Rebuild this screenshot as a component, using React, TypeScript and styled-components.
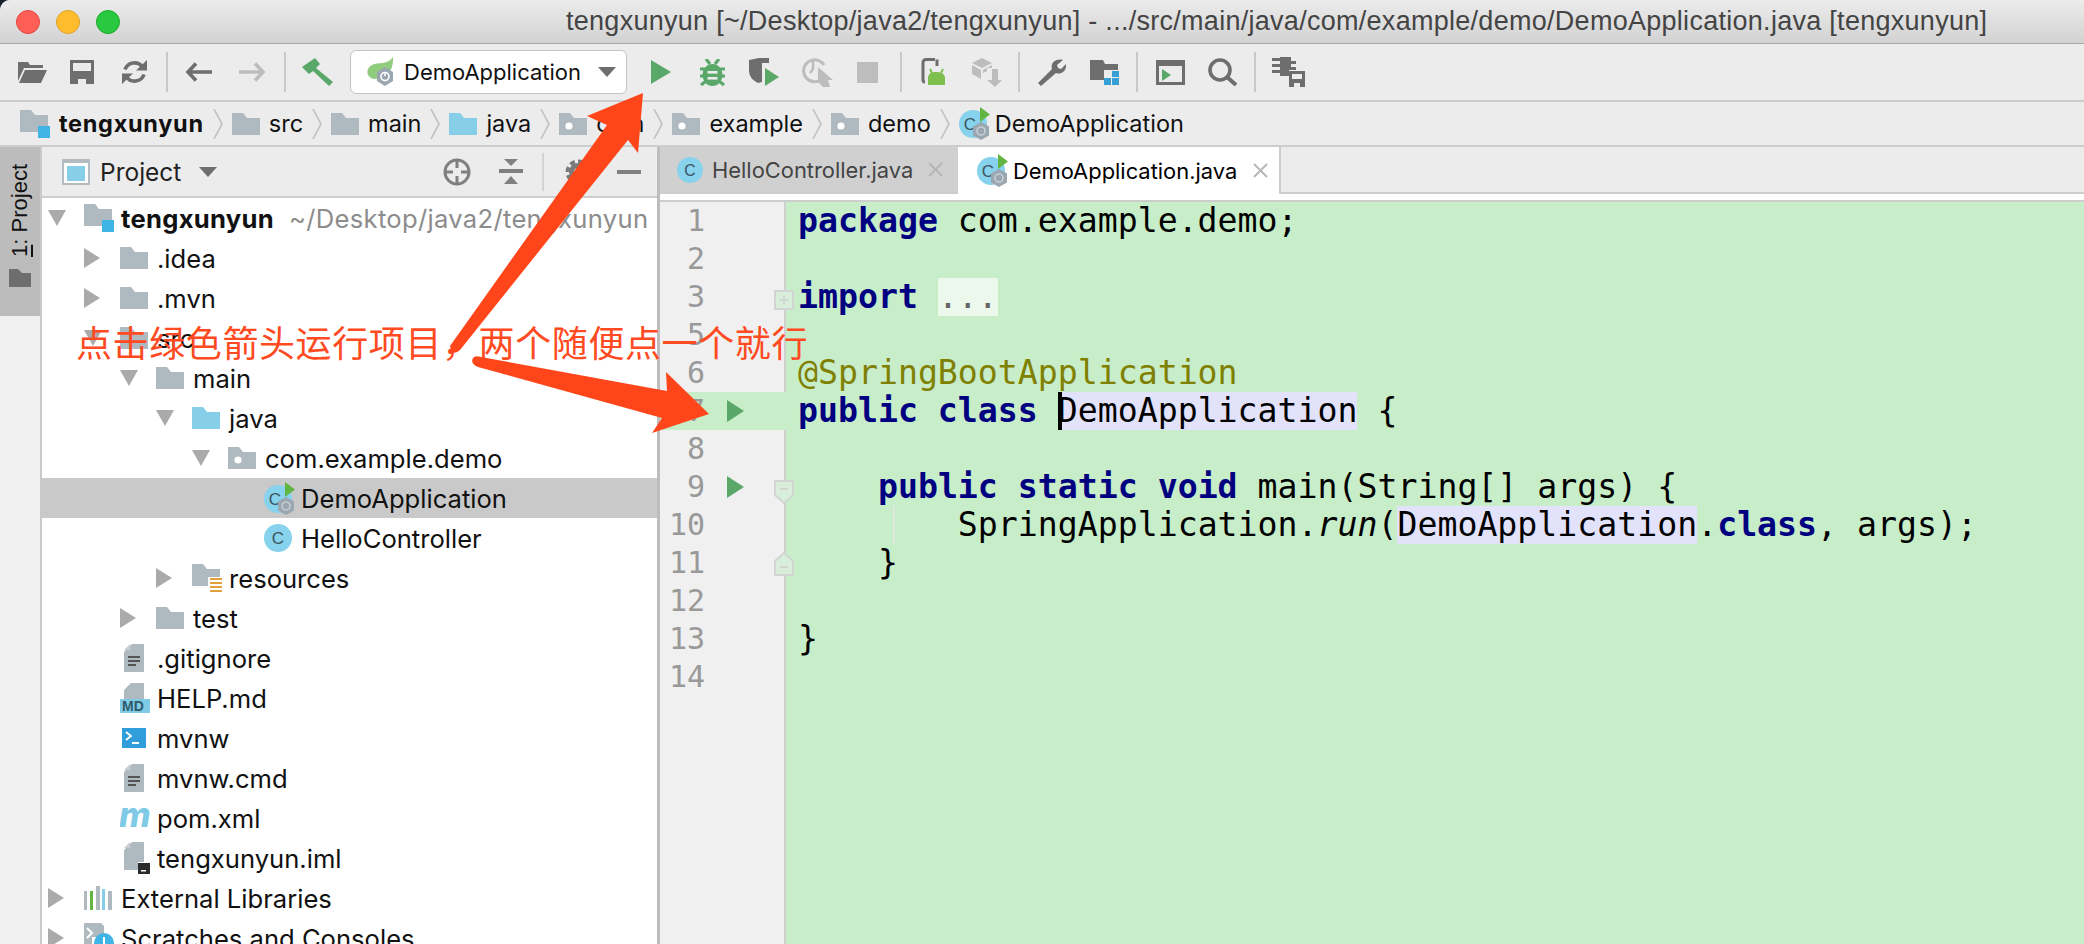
import React from "react";
import styled, { createGlobalStyle } from "styled-components";

const UI = `Inter, "Liberation Sans", sans-serif`;
const GREY = "#6e6e6e";
const DIM = "#bdbdbd";
const GREEN = "#59a869";
const FOLDER = "#afb9c0";
const BLUE = "#87cee9";

const Global = createGlobalStyle`
  html, body { margin: 0; padding: 0; height: 100%; background: #17212e; overflow: hidden; }
  #root { height: 100%; }
`;

const Window = styled.div`
  position: relative; width: 2084px; height: 944px; overflow: hidden;
  display: flex; flex-direction: column; background: #ececec;
  border-top-left-radius: 10px; font-family: ${UI};
`;
const TitleBar = styled.div`
  height: 43px; flex: none; display: flex; align-items: center; padding-left: 16px;
  background: linear-gradient(#ececec, #d2d2d2); border-bottom: 1px solid #a9a9a9;
`;
const Lights = styled.div`display: flex; gap: 16px;`;
const Light = styled.span<{ $c: string; $b: string }>`
  width: 24px; height: 24px; border-radius: 50%; box-sizing: border-box;
  background: ${(p) => p.$c}; border: 1px solid ${(p) => p.$b};
`;
const Title = styled.div`
  margin-left: 446px; font-family: "Liberation Sans", sans-serif; font-size: 27px; letter-spacing: 0.28px;
  color: #444; white-space: nowrap;
`;
const Toolbar = styled.div`
  height: 56px; flex: none; display: flex; align-items: center; padding-left: 7px;
  background: #ececec; border-bottom: 2px solid #cdcdcd;
`;
const Slot = styled.div<{ $w: number }>`
  width: ${(p) => p.$w}px; flex: none; display: flex; align-items: center; justify-content: center;
`;
const Sep = styled.div<{ $ml?: number }>`
  width: 2px; height: 40px; flex: none; background: #c9c9c9; margin-left: ${(p) => p.$ml ?? 0}px;
`;
const RunConfig = styled.div`
  width: 277px; height: 44px; flex: none; box-sizing: border-box; margin-left: 2px;
  display: flex; align-items: center; padding-left: 15px; gap: 8px;
  background: #fff; border: 1px solid #c4c4c4; border-radius: 6px;
  font-size: 22px; color: #111;
`;
const Caret = styled.span`
  width: 0; height: 0; margin-left: 9px;
  border-left: 9px solid transparent; border-right: 9px solid transparent; border-top: 10px solid ${GREY};
`;
const NavBar = styled.div`
  height: 43px; flex: none; display: flex; align-items: center; padding-left: 20px; gap: 9px;
  background: #ececec; border-bottom: 2px solid #cdcdcd; font-size: 23.5px; color: #111;
`;
const Crumb = styled.div<{ $bold?: boolean; $gap?: number }>`
  display: flex; align-items: center; gap: ${(p) => p.$gap ?? 9}px;
  font-weight: ${(p) => (p.$bold ? 700 : 400)};
  letter-spacing: ${(p) => (p.$bold ? "0.7px" : "0")};
`;
const Main = styled.div`flex: 1; min-height: 0; display: flex;`;
const Stripe = styled.div`
  width: 40px; flex: none; background: #f0f0f0; border-right: 2px solid #c9c9c9;
`;
const StripeTab = styled.div`
  height: 169px; box-sizing: border-box; background: #bcbcbc; padding-top: 17px;
  display: flex; flex-direction: column; align-items: center; gap: 12px;
`;
const StripeLabel = styled.div`
  writing-mode: vertical-rl; transform: rotate(180deg); font-family: "Liberation Sans", sans-serif;
  font-size: 22px; color: #111; white-space: nowrap; line-height: 24px;
  u { text-decoration: underline; }
`;
const Panel = styled.div`
  width: 615px; flex: none; display: flex; flex-direction: column; background: #fff;
  border-right: 3px solid #bdbdbd;
`;
const PanelHead = styled.div`
  height: 49px; flex: none; display: flex; align-items: center; padding-left: 20px;
  background: #ececec; border-bottom: 2px solid #cdcdcd; font-size: 24.5px; color: #222;
`;
const PanelName = styled.span`margin-left: 10px;`;
const PanelCaret = styled(Caret)`margin: 0 auto 0 18px;`;
const PanelTool = styled.div<{ $mr: number }>`
  display: flex; margin-right: ${(p) => p.$mr}px; flex: none;
`;
const PanelSep = styled.div`width: 2px; height: 38px; background: #d4d4d4; margin-right: 21px;`;
const Tree = styled.div`flex: 1; min-height: 0; overflow: hidden;`;
const Row = styled.div<{ $depth: number; $sel?: boolean }>`
  height: 40px; display: flex; align-items: center; white-space: nowrap;
  padding-left: ${(p) => 6 + p.$depth * 36}px;
  background: ${(p) => (p.$sel ? "#c9c9c9" : "transparent")};
  font-size: 25.6px; color: #111;
`;
const ArrowSlot = styled.div`width: 36px; flex: none; display: flex; align-items: center;`;
const IconSlot = styled.div`width: 37px; flex: none; display: flex; align-items: center;`;
const RootName = styled.span`font-weight: 700; letter-spacing: 0.3px;`;
const RootPath = styled.span`color: #8c8c8c; margin-left: 15px; letter-spacing: 0.3px;`;
const Right = styled.div`flex: 1; min-width: 0; display: flex; flex-direction: column;`;
const Tabs = styled.div`
  height: 45px; flex: none; display: flex; background: #ececec; border-bottom: 2px solid #cdcdcd;
`;
const Tab = styled.div<{ $active?: boolean; $w: number; $pl: number }>`
  width: ${(p) => p.$w}px; height: ${(p) => (p.$active ? 47 : 45)}px; flex: none; box-sizing: border-box;
  display: flex; align-items: center; padding-left: ${(p) => p.$pl}px;
  background: ${(p) => (p.$active ? "#fff" : "#d0d0d0")};
  border-right: ${(p) => (p.$active ? "2px solid #cdcdcd" : "none")};
  font-size: 21.9px; color: ${(p) => (p.$active ? "#000" : "#444")};
`;
const TabLabel = styled.span<{ $ml: number }>`margin-left: ${(p) => p.$ml}px;`;
const TabClose = styled.span<{ $ml: number }>`display: flex; margin-left: ${(p) => p.$ml}px;`;
const TabGap = styled.div`
  height: 6px; flex: none; background: #fff; border-bottom: 2px solid #cdcdcd;
`;
const Editor = styled.div`flex: 1; min-height: 0; display: flex; background: #c7edc9;`;
const Gutter = styled.div`
  width: 124px; flex: none; background: #f0f0f0; border-right: 2px solid #d0d0d0;
`;
const GutterRow = styled.div<{ $cur?: boolean }>`
  position: relative; height: 38px; display: flex; align-items: center; margin-right: -2px;
  background: ${(p) => (p.$cur ? "#c7edc9" : "transparent")};
`;
const LineNo = styled.span`
  width: 45px; flex: none; text-align: right; font-family: "DejaVu Sans Mono", monospace;
  font-size: 30px; line-height: 38px; color: #999;
`;
const GutterRun = styled.span`display: flex; margin-left: 22px;`;
const Fold = styled.span<{ $top: number }>`
  position: absolute; left: 114px; top: ${(p) => p.$top}px; display: flex;
`;
const Code = styled.div`
  flex: 1; min-width: 0; padding-left: 12px; font-family: "DejaVu Sans Mono", monospace;
  font-size: 33.2px; color: #000; overflow: hidden;
`;
const CodeRow = styled.div`position: relative; height: 38px; line-height: 38px; white-space: pre;`;
const Kw = styled.span`color: #000080; font-weight: 700;`;
const Ann = styled.span`color: #808000;`;
const Ital = styled.span`font-style: italic;`;
const Hl = styled.span<{ $caret?: boolean }>`
  display: inline-block; height: 38px; background: #e2e2fb; vertical-align: top;
  box-shadow: ${(p) => (p.$caret ? "inset 4px 0 0 #000" : "none")};
`;
const Folded = styled.span`
  display: inline-block; height: 38px; background: #ecf8ec; color: #666; vertical-align: top;
`;
const IndentGuide = styled.span`
  position: absolute; left: 95px; top: 0; width: 2px; height: 38px; background: #dfe8df;
`;
const Note = styled.div`
  position: absolute; left: 76px; top: 319px; font-family: "Noto Sans CJK SC", sans-serif;
  font-size: 36px; letter-spacing: 0.6px; line-height: 44px; color: #ff4a22; font-weight: 400;
  white-space: nowrap; pointer-events: none;
`;
const Overlay = styled.svg`position: absolute; left: 0; top: 0; pointer-events: none;`;

/* ------------ icons ------------ */
const OpenIcon = () => (
  <svg width="29" height="21" viewBox="0 0 29 21" fill={GREY}>
    <path d="M0 0H10L12 3H25V6H6L0 19Z" />
    <path d="M7 8H29L23 21H1Z" />
  </svg>
);
const SaveIcon = () => (
  <svg width="24" height="24" viewBox="0 0 24 24">
    <rect width="24" height="24" fill={GREY} />
    <rect x="3" y="3" width="18" height="8" fill="#ececec" />
    <rect x="8" y="19" width="8" height="5" fill="#ececec" />
  </svg>
);
const SyncIcon = () => (
  <svg width="25" height="24" viewBox="0 0 25 24" fill="none" stroke={GREY} strokeWidth="3.6">
    <path d="M3 9.5A10 10 0 0 1 20.5 7" />
    <path d="M22 14.5A10 10 0 0 1 4.5 17" />
    <path d="M14 10.5H25V0Z" fill={GREY} stroke="none" />
    <path d="M11 13.5H0V24Z" fill={GREY} stroke="none" />
  </svg>
);
const ArrowIcon = ({ flip, color }: { flip?: boolean; color: string }) => (
  <svg width="27" height="20" viewBox="0 0 27 20" fill="none" stroke={color} strokeWidth="3.6" style={flip ? { transform: "scaleX(-1)" } : undefined}>
    <path d="M11 1.5L3 10L11 18.5M3 10H27" />
  </svg>
);
const HammerIcon = () => (
  <svg width="31" height="28" viewBox="0 0 31 28" fill={GREEN}>
    <path d="M0 9L13 0L18 6L14 10L31 24L27 28L11 13L7 16Z" />
  </svg>
);
const PlayIcon = ({ w = 20, h = 24 }: { w?: number; h?: number }) => (
  <svg width={w} height={h} viewBox="0 0 20 24" fill={GREEN} preserveAspectRatio="none">
    <path d="M0 0L20 12L0 24Z" />
  </svg>
);
const BugIcon = () => (
  <svg width="25" height="27" viewBox="0 0 25 27" fill={GREEN}>
    <ellipse cx="12.5" cy="16" rx="10" ry="11" />
    <path d="M6 0L10 5M19 0L15 5M0 10H25M0 17H25M1 26L6 22M24 26L19 22" stroke={GREEN} strokeWidth="3.2" fill="none" />
    <rect x="7.5" y="12" width="10" height="2.6" fill="#ececec" />
    <rect x="7.5" y="18" width="10" height="2.6" fill="#ececec" />
  </svg>
);
const CoverageIcon = () => (
  <svg width="31" height="28" viewBox="0 0 31 28">
    <path d="M0 2L10 0H20V5H13V24L9 25C3 22 0 18 0 12Z" fill={GREY} />
    <path d="M16 10L30 19L16 28Z" fill={GREEN} />
  </svg>
);
const ProfileIcon = () => (
  <svg width="33" height="32" viewBox="0 0 33 32" fill="none" stroke={DIM}>
    <path d="M21 22A11 11 0 1 1 22 9" strokeWidth="3" />
    <path d="M11 5V13L8 17" strokeWidth="2.6" />
    <path d="M16 11L31 24H26L28 31H21L16 26Z" fill={DIM} stroke="none" />
  </svg>
);
const StopIcon = () => <svg width="21" height="21"><rect width="21" height="21" fill={DIM} /></svg>;
const DeviceIcon = () => (
  <svg width="25" height="28" viewBox="0 0 25 28" fill="none">
    <path d="M14 1.5H5A3 3 0 0 0 2 4.5V22A2 2 0 0 0 4 24" stroke={GREY} strokeWidth="3" />
    <path d="M16 1.5V8" stroke={GREY} strokeWidth="3" />
    <path d="M7 27V20C7 16 10 14 15 14C20 14 24 16 24 20V27Z" fill="#7fbf4e" />
    <path d="M9 11L11 15M22 11L20 15" stroke="#7fbf4e" strokeWidth="2" />
  </svg>
);
const BuildIcon = () => (
  <svg width="30" height="29" viewBox="0 0 30 29" fill={DIM}>
    <path d="M10 0L20 5L10 10L0 5Z" />
    <path d="M0 7L9 12V21L0 16Z" />
    <path d="M20 7V10H15V13L11 15V12Z" />
    <path d="M20 11H26V22H30L23 29L15 22H20Z" />
  </svg>
);
const WrenchIcon = () => (
  <svg width="28" height="27" viewBox="0 0 28 27" fill={GREY}>
    <path d="M3 27L0 24L14 10C12 4 18 -1 25 1L19 6L20 9L23 10L28 5C29 12 23 16 18 14Z" />
  </svg>
);
const StructIcon = () => (
  <svg width="29" height="25" viewBox="0 0 29 25">
    <path d="M0 0H13L15 4H28V10H14V20H0Z" fill={GREY} />
    <rect x="22" y="11" width="7" height="6" fill="#389fd6" />
    <rect x="14" y="18" width="7" height="7" fill="#389fd6" />
    <rect x="22" y="18" width="7" height="7" fill="#389fd6" />
  </svg>
);
const TermIcon = () => (
  <svg width="29" height="25" viewBox="0 0 29 25">
    <rect x="1.5" y="1.5" width="26" height="22" fill="none" stroke={GREY} strokeWidth="3" />
    <rect y="0" width="29" height="6" fill={GREY} />
    <path d="M6 9L15 15L6 21Z" fill={GREEN} />
  </svg>
);
const SearchIcon = () => (
  <svg width="29" height="28" viewBox="0 0 29 28" fill="none" stroke={GREY}>
    <circle cx="12" cy="12" r="10" strokeWidth="3.6" />
    <path d="M19 19L28 27" strokeWidth="4" />
  </svg>
);
const StoreIcon = () => (
  <svg width="33" height="30" viewBox="0 0 33 30" fill={GREY}>
    <path d="M8 0H19V4H24V7H19V10H24V13H17V19H8V16H0V13H8V10H0V7H8V4H0V1H8Z" />
    <rect x="17" y="14" width="16" height="16" />
    <rect x="20" y="17" width="10" height="5" fill="#ececec" />
    <rect x="22" y="26" width="6" height="4" fill="#ececec" />
  </svg>
);
const SpringRun = () => (
  <svg width="30" height="30" viewBox="0 0 30 30">
    <path d="M27 0C28 14 20 22 8 22C0 20 -1 12 6 8C12 5 22 8 27 0Z" fill="#8fcc7e" />
    <path d="M19 10L27 15V24L19 29L11 24V15Z" fill="#9aa7b0" />
    <circle cx="19" cy="19.5" r="4" fill="none" stroke="#fff" strokeWidth="1.6" />
    <path d="M19 15V19" stroke="#fff" strokeWidth="1.6" />
  </svg>
);
const Chevron = () => (
  <svg width="10" height="30" viewBox="0 0 10 30" fill="none" stroke="#c2c2c2" strokeWidth="1.6">
    <path d="M1 0L9 15L1 30" />
  </svg>
);
const Folder = ({ c = FOLDER }: { c?: string }) => (
  <svg width="28" height="22" viewBox="0 0 28 22" fill={c}>
    <path d="M0 0H11L15 5H28V22H0Z" />
  </svg>
);
const Pkg = () => (
  <svg width="28" height="22" viewBox="0 0 28 22">
    <path d="M0 0H11L15 5H28V22H0Z" fill={FOLDER} />
    <circle cx="10" cy="13" r="3.6" fill="#fff" />
  </svg>
);
const RootFolder = () => (
  <svg width="30" height="28" viewBox="0 0 30 28">
    <path d="M0 0H11L15 5H28V22H0Z" fill={FOLDER} />
    <rect x="18" y="16" width="12" height="12" fill="#3fb5e5" />
  </svg>
);
const ResFolder = () => (
  <svg width="30" height="28" viewBox="0 0 30 28">
    <path d="M0 0H11L15 5H28V22H0Z" fill={FOLDER} />
    <rect x="16" y="13" width="14" height="15" fill="#fff" />
    <path d="M18 15H30M18 19H30M18 23H30M18 27H30" stroke="#e0a23c" strokeWidth="2" />
  </svg>
);
const ClassIcon = ({ size = 28 }: { size?: number }) => (
  <svg width={size} height={size} viewBox="0 0 28 28">
    <circle cx="14" cy="14" r="14" fill="#87d2ec" />
    <text x="14" y="20" textAnchor="middle" fontFamily="Liberation Sans, sans-serif" fontSize="17" fill="#3c5560">C</text>
  </svg>
);
const SpringClass = () => (
  <svg width="31" height="33" viewBox="0 0 31 33">
    <circle cx="14" cy="17" r="14" fill="#87d2ec" />
    <text x="11" y="23" textAnchor="middle" fontFamily="Liberation Sans, sans-serif" fontSize="17" fill="#3c5560">C</text>
    <path d="M21 0L31 7.5L21 15Z" fill="#62b543" />
    <path d="M22 15L30 19.5V28.5L22 33L14 28.5V19.5Z" fill="#9aa7b0" />
    <circle cx="22" cy="24" r="4" fill="none" stroke="#c5ced4" strokeWidth="1.6" />
  </svg>
);
const Doc = () => (
  <svg width="30" height="28" viewBox="0 0 30 28">
    <path d="M4 8L12 0H24V28H4Z" fill={FOLDER} />
    <path d="M4 6L10 0V6Z" fill="#c9ced2" />
    <path d="M8 13H20M8 17H20M8 21H16" stroke="#555" strokeWidth="2" />
  </svg>
);
const MdIcon = () => (
  <svg width="30" height="30" viewBox="0 0 30 30">
    <path d="M4 7L11 0H24V16H4Z" fill={FOLDER} />
    <rect y="16" width="30" height="14" fill="#7fcbe6" />
    <text x="2" y="28" fontFamily="Liberation Sans, sans-serif" fontWeight="700" fontSize="14" fill="#2f5a68">MD</text>
  </svg>
);
const ShellIcon = () => (
  <svg width="30" height="20" viewBox="0 0 30 20">
    <rect x="2" width="24" height="20" fill="#2f9edb" />
    <path d="M6 4L11 8L6 12M12 15H19" fill="none" stroke="#fff" strokeWidth="1.8" />
  </svg>
);
const MavenIcon = () => (
  <svg width="32" height="24" viewBox="0 0 32 24">
    <text x="-1" y="21" fontFamily="Inter, sans-serif" fontStyle="italic" fontWeight="800" fontSize="34" fill="#7fcbe6">m</text>
  </svg>
);
const ImlIcon = () => (
  <svg width="30" height="32" viewBox="0 0 30 32">
    <path d="M4 8L12 0H24V28H4Z" fill={FOLDER} />
    <path d="M4 6L10 0V6Z" fill="#c9ced2" />
    <rect x="18" y="20" width="12" height="12" fill="#fff" />
    <rect x="18" y="21" width="12" height="11" fill="#2b2b2b" />
    <rect x="21" y="28" width="5" height="1.5" fill="#fff" />
  </svg>
);
const LibIcon = () => (
  <svg width="28" height="24" viewBox="0 0 28 24">
    <rect y="5" width="3" height="19" fill={FOLDER} />
    <rect x="6" y="5" width="3" height="19" fill="#62b543" />
    <rect x="12" y="0" width="4" height="24" fill={FOLDER} />
    <rect x="18" y="3" width="3" height="21" fill={BLUE} />
    <rect x="24" y="5" width="4" height="19" fill={FOLDER} />
  </svg>
);
const ScratchIcon = () => (
  <svg width="30" height="30" viewBox="0 0 30 30">
    <path d="M0 0H17L20 3V14H8V21H0Z" fill={FOLDER} />
    <path d="M3 5L8 10L3 15" fill="none" stroke="#fff" strokeWidth="2" />
    <circle cx="20" cy="20" r="10" fill="#3fb5e5" />
    <path d="M20 14V21" stroke="#fff" strokeWidth="2" />
  </svg>
);
const TriRight = () => <svg width="16" height="20" viewBox="0 0 16 20"><path d="M0 0L16 10L0 20Z" fill="#aaa" /></svg>;
const TriDown = () => <svg width="18" height="16" viewBox="0 0 18 16"><path d="M0 0H18L9 16Z" fill="#aaa" /></svg>;
const CloseX = () => (
  <svg width="15" height="15" viewBox="0 0 15 15" fill="none" stroke="#b5b5b5" strokeWidth="1.8"><path d="M1 1L14 14M14 1L1 14" /></svg>
);
const ProjectIcon = () => (
  <svg width="28" height="26" viewBox="0 0 28 26">
    <rect x="1" y="1" width="26" height="24" fill="#fff" stroke="#b4bcc2" strokeWidth="2" />
    <rect y="0" width="28" height="4" fill="#b4bcc2" />
    <rect x="5" y="7" width="18" height="15" fill={BLUE} />
  </svg>
);
const LocateIcon = () => (
  <svg width="28" height="28" viewBox="0 0 28 28" fill="none" stroke="#808080" strokeWidth="3">
    <circle cx="14" cy="14" r="12" />
    <path d="M14 2V10M14 18V26M2 14H10M18 14H26" />
  </svg>
);
const CollapseIcon = () => (
  <svg width="24" height="25" viewBox="0 0 24 25" fill="#808080">
    <path d="M5 0H19L12 7Z" />
    <rect y="10" width="24" height="4" />
    <path d="M12 17L19 25H5Z" />
  </svg>
);
const GearIcon = () => (
  <svg width="26" height="28" viewBox="0 0 26 28" fill="none" stroke="#7a7a7a">
    <circle cx="13" cy="14" r="6.5" strokeWidth="5" />
    <circle cx="13" cy="14" r="10.5" strokeWidth="4" strokeDasharray="5 3.2" />
  </svg>
);
const HideIcon = () => <svg width="24" height="4"><rect width="24" height="4" fill="#808080" /></svg>;
const StripeFolder = () => (
  <svg width="22" height="18" viewBox="0 0 22 18" fill={GREY}>
    <path d="M0 0H9L13 4H22V18H0Z" />
  </svg>
);
const FoldPlus = () => (
  <svg width="20" height="20" viewBox="0 0 20 20" fill="none" stroke="#d2d6d2" strokeWidth="2">
    <rect x="1" y="1" width="18" height="18" fill="#d8eeda" />
    <path d="M10 6V14M6 10H14" />
  </svg>
);
const FoldDown = () => (
  <svg width="20" height="24" viewBox="0 0 20 24" fill="#d8eeda" stroke="#d2d6d2" strokeWidth="2">
    <path d="M1 1H19V15L10 23L1 15Z" />
    <path d="M6 9H14" />
  </svg>
);
const FoldUp = () => (
  <svg width="20" height="24" viewBox="0 0 20 24" fill="#d8eeda" stroke="#d2d6d2" strokeWidth="2">
    <path d="M1 23H19V9L10 1L1 9Z" />
    <path d="M6 15H14" />
  </svg>
);

const tree: { d: number; arrow?: "r" | "d"; icon: React.ReactNode; label: React.ReactNode; sel?: boolean }[] = [
  { d: 0, arrow: "d", icon: <RootFolder />, label: <><RootName>tengxunyun</RootName><RootPath>~/Desktop/java2/tengxunyun</RootPath></> },
  { d: 1, arrow: "r", icon: <Folder />, label: ".idea" },
  { d: 1, arrow: "r", icon: <Folder />, label: ".mvn" },
  { d: 1, arrow: "d", icon: <Folder />, label: "src" },
  { d: 2, arrow: "d", icon: <Folder />, label: "main" },
  { d: 3, arrow: "d", icon: <Folder c={BLUE} />, label: "java" },
  { d: 4, arrow: "d", icon: <Pkg />, label: "com.example.demo" },
  { d: 5, icon: <SpringClass />, label: "DemoApplication", sel: true },
  { d: 5, icon: <ClassIcon />, label: "HelloController" },
  { d: 3, arrow: "r", icon: <ResFolder />, label: "resources" },
  { d: 2, arrow: "r", icon: <Folder />, label: "test" },
  { d: 1, icon: <Doc />, label: ".gitignore" },
  { d: 1, icon: <MdIcon />, label: "HELP.md" },
  { d: 1, icon: <ShellIcon />, label: "mvnw" },
  { d: 1, icon: <Doc />, label: "mvnw.cmd" },
  { d: 1, icon: <MavenIcon />, label: "pom.xml" },
  { d: 1, icon: <ImlIcon />, label: "tengxunyun.iml" },
  { d: 0, arrow: "r", icon: <LibIcon />, label: "External Libraries" },
  { d: 0, arrow: "r", icon: <ScratchIcon />, label: "Scratches and Consoles" },
];

const lines: { n: number; run?: boolean; cur?: boolean; fold?: React.ReactNode; foldTop?: number; code: React.ReactNode }[] = [
  { n: 1, code: <><Kw>package</Kw> com.example.demo;</> },
  { n: 2, code: "" },
  { n: 3, fold: <FoldPlus />, foldTop: 12, code: <><Kw>import</Kw> <Folded>...</Folded></> },
  { n: 5, code: "" },
  { n: 6, code: <Ann>@SpringBootApplication</Ann> },
  { n: 7, run: true, cur: true, code: <><Kw>public class</Kw> <Hl $caret>DemoApplication</Hl> {"{"}</> },
  { n: 8, code: "" },
  { n: 9, run: true, fold: <FoldDown />, foldTop: 12, code: <>{"    "}<Kw>public static void</Kw> main(String[] args) {"{"}</> },
  { n: 10, code: <>{"        "}SpringApplication.<Ital>run</Ital>(<Hl>DemoApplication</Hl>.<Kw>class</Kw>, args);<IndentGuide /></> },
  { n: 11, fold: <FoldUp />, foldTop: 8, code: <>{"    }"}</> },
  { n: 12, code: "" },
  { n: 13, code: "}" },
  { n: 14, code: "" },
];

export default function App() {
  return (
    <Window>
      <Global />
      <TitleBar>
        <Lights>
          <Light $c="#ff5f57" $b="#e2463f" />
          <Light $c="#ffbd2e" $b="#dea123" />
          <Light $c="#28c940" $b="#1aab29" />
        </Lights>
        <Title>tengxunyun [~/Desktop/java2/tengxunyun] - .../src/main/java/com/example/demo/DemoApplication.java [tengxunyun]</Title>
      </TitleBar>
      <Toolbar>
        <Slot $w={50}><OpenIcon /></Slot>
        <Slot $w={50}><SaveIcon /></Slot>
        <Slot $w={54}><SyncIcon /></Slot>
        <Sep $ml={5} />
        <Slot $w={60}><ArrowIcon color={GREY} /></Slot>
        <Slot $w={48}><ArrowIcon flip color={DIM} /></Slot>
        <Sep $ml={8} />
        <Slot $w={62}><HammerIcon /></Slot>
        <RunConfig><SpringRun />DemoApplication<Caret /></RunConfig>
        <Slot $w={68}><PlayIcon /></Slot>
        <Slot $w={34}><BugIcon /></Slot>
        <Slot $w={70}><CoverageIcon /></Slot>
        <Slot $w={38}><ProfileIcon /></Slot>
        <Slot $w={60}><StopIcon /></Slot>
        <Sep $ml={3} />
        <Slot $w={62}><DeviceIcon /></Slot>
        <Slot $w={46}><BuildIcon /></Slot>
        <Sep $ml={8} />
        <Slot $w={64}><WrenchIcon /></Slot>
        <Slot $w={40}><StructIcon /></Slot>
        <Sep $ml={12} />
        <Slot $w={64}><TermIcon /></Slot>
        <Slot $w={40}><SearchIcon /></Slot>
        <Sep $ml={12} />
        <Slot $w={64}><StoreIcon /></Slot>
      </Toolbar>
      <NavBar>
        <Crumb $bold><RootFolder />tengxunyun</Crumb><Chevron />
        <Crumb><Folder />src</Crumb><Chevron />
        <Crumb><Folder />main</Crumb><Chevron />
        <Crumb><Folder c={BLUE} />java</Crumb><Chevron />
        <Crumb><Pkg />com</Crumb><Chevron />
        <Crumb><Pkg />example</Crumb><Chevron />
        <Crumb><Pkg />demo</Crumb><Chevron />
        <Crumb $gap={5}><SpringClass />DemoApplication</Crumb>
      </NavBar>
      <Main>
        <Stripe>
          <StripeTab>
            <StripeLabel><u>1</u>: Project</StripeLabel>
            <StripeFolder />
          </StripeTab>
        </Stripe>
        <Panel>
          <PanelHead>
            <ProjectIcon />
            <PanelName>Project</PanelName>
            <PanelCaret />
            <PanelTool $mr={28}><LocateIcon /></PanelTool>
            <PanelTool $mr={19}><CollapseIcon /></PanelTool>
            <PanelSep />
            <PanelTool $mr={26}><GearIcon /></PanelTool>
            <PanelTool $mr={16}><HideIcon /></PanelTool>
          </PanelHead>
          <Tree>
            {tree.map((r, i) => (
              <Row key={i} $depth={r.d} $sel={r.sel}>
                <ArrowSlot>{r.arrow === "r" ? <TriRight /> : r.arrow === "d" ? <TriDown /> : null}</ArrowSlot>
                <IconSlot>{r.icon}</IconSlot>
                <span>{r.label}</span>
              </Row>
            ))}
          </Tree>
        </Panel>
        <Right>
          <Tabs>
            <Tab $w={298} $pl={17}><ClassIcon size={26} /><TabLabel $ml={9}>HelloController.java</TabLabel><TabClose $ml={15}><CloseX /></TabClose></Tab>
            <Tab $active $w={323} $pl={19}><SpringClass /><TabLabel $ml={5}>DemoApplication.java</TabLabel><TabClose $ml={16}><CloseX /></TabClose></Tab>
          </Tabs>
          <TabGap />
          <Editor>
            <Gutter>
              {lines.map((l) => (
                <GutterRow key={l.n} $cur={l.cur}>
                  <LineNo>{l.n}</LineNo>
                  {l.run && <GutterRun><PlayIcon w={17} h={22} /></GutterRun>}
                  {l.fold && <Fold $top={l.foldTop ?? 0}>{l.fold}</Fold>}
                </GutterRow>
              ))}
            </Gutter>
            <Code>
              {lines.map((l) => <CodeRow key={l.n}>{l.code}</CodeRow>)}
            </Code>
          </Editor>
        </Right>
      </Main>
      <Note>点击绿色箭头运行项目，两个随便点一个就行</Note>
      <Overlay width="2084" height="944" viewBox="0 0 2084 944">
        <path d="M643 93L638 153L628 140L460 350Q452 357 450 346L607 125L587 116Z" fill="#ff461b" />
        <path d="M709 414L652 433L662 418L478 367Q470 364 473 358Q475 355 481 357L667 391L666 372Z" fill="#ff461b" />
      </Overlay>
    </Window>
  );
}
